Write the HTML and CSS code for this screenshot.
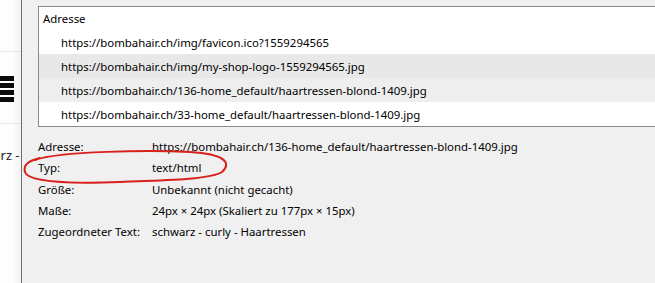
FILE: index.html
```html
<!DOCTYPE html>
<html lang="de">
<head>
  <meta charset="UTF-8" />
  <title>Seiteninformationen</title>
  <link rel="stylesheet" href="styles.css">
</head>
<body>
  <div class="screen">
    <aside class="page-strip">
      <div class="strip-row"></div>
      <div class="strip-row burger">
        <span></span><span></span><span></span><span></span>
      </div>
      <div class="strip-row text">warz -</div>
    </aside>

    <section class="dialog">
      <div class="list">
        <div class="list-head">Adresse</div>
        <div class="list-row">https://bombahair.ch/img/favicon.ico?1559294565</div>
        <div class="list-row hover">https://bombahair.ch/img/my-shop-logo-1559294565.jpg</div>
        <div class="list-row alt">https://bombahair.ch/136-home_default/haartressen-blond-1409.jpg</div>
        <div class="list-row">https://bombahair.ch/33-home_default/haartressen-blond-1409.jpg</div>
      </div>

      <dl class="info">
        <dt>Adresse:</dt>
        <dd>https://bombahair.ch/136-home_default/haartressen-blond-1409.jpg</dd>
        <dt>Typ:</dt>
        <dd>text/html</dd>
        <dt>Größe:</dt>
        <dd>Unbekannt (nicht gecacht)</dd>
        <dt>Maße:</dt>
        <dd>24px × 24px (Skaliert zu 177px × 15px)</dd>
        <dt>Zugeordneter Text:</dt>
        <dd>schwarz - curly - Haartressen</dd>
      </dl>

      <!-- rote Markierung um "Typ" -->
      <svg class="mark" width="220" height="42" viewBox="0 0 220 42">
        <path d="M13 12 C38 3, 128 2, 168 4 C203 6, 210 15, 200 24 C188 32, 138 32, 98 34 C48 36, 6 34, 3 24 C1 17, 6 13, 18 10"
              fill="none" stroke="#d8201c" stroke-width="2" stroke-linecap="round"/>
      </svg>
    </section>
  </div>
</body>
</html>
```

FILE: styles.css
```css
* { margin: 0; padding: 0; box-sizing: border-box; }
body {
  font-family: 'Noto Sans', 'Segoe UI', sans-serif;
  font-size: 11.4px;
  color: #000;
  background: #fff;
}
.screen {
  width: 655px;
  height: 283px;
  display: flex;
  overflow: hidden;
}

/* Seite hinter dem Dialog */
.page-strip {
  width: 21px;
  flex: none;
  overflow: hidden;
  background: linear-gradient(to right, #fdfdfd 60%, #f2f2f2);
  display: flex;
  flex-direction: column;
}
.strip-row {
  height: 52px;
  border-bottom: 1px solid #e6e6e6;
}
.strip-row.burger {
  height: 72px;
  display: flex;
  flex-direction: column;
  justify-content: center;
  gap: 2px;
  padding-top: 2px;
}
.burger span {
  display: block;
  width: 14px;
  height: 5px;
  background: #0a0a0a;
}
.strip-row.text {
  border: none;
  padding-top: 22px;
  margin-left: -17px;
  white-space: nowrap;
  font-size: 13px;
  color: #222;
}

/* Dialog */
.dialog {
  flex: 1;
  position: relative;
  background: #f0f0f0;
  border-left: 1px solid #707070;
  padding: 6px 0 0 16px;
}
.list {
  background: #fff;
  border: 1px solid #8a8a8a;
  border-right: none;
  height: 121px;
  overflow: hidden;
}
.list-head {
  height: 23px;
  padding: 4px 0 0 4px;
}
.list-row {
  height: 24px;
  padding: 5px 0 0 22px;
  white-space: nowrap;
}
.list-row.hover { background: #e8e8e8; }
.list-row.alt { background: #eeeeee; }

.info {
  display: grid;
  grid-template-columns: 114px auto;
  grid-auto-rows: 21.3px;
  align-items: center;
  padding-top: 9px;
}
.info dt, .info dd { white-space: nowrap; }

.mark {
  position: absolute;
  left: 0;
  top: 148px;
}
```
